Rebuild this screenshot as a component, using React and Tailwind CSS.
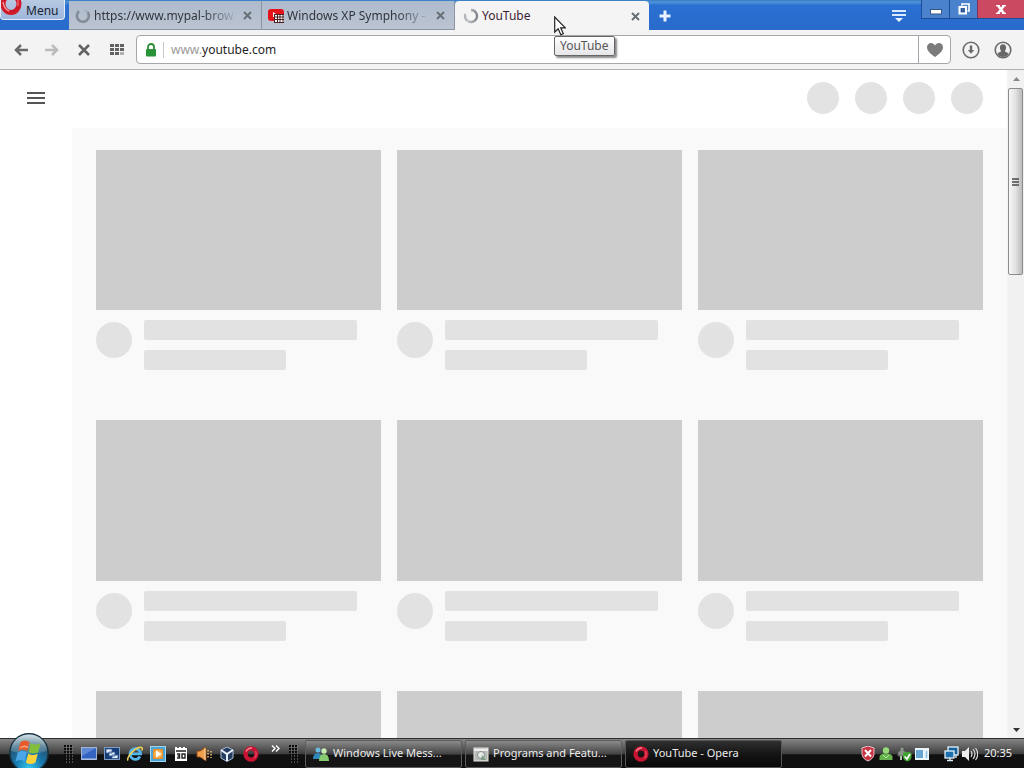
import React from "react";

const videos = ["a", "b", "c", "d", "e", "f", "g", "h", "i"];

function Spinner({ id }) {
  return (
    <svg className="size-4 shrink-0" viewBox="0 0 16 16" fill="none" aria-hidden="true">
      <defs>
        <linearGradient id={id} x1="0" y1="0" x2="1" y2="0">
          <stop offset="0" stopColor="#c9ccd1" />
          <stop offset="1" stopColor="#7f858d" />
        </linearGradient>
      </defs>
      <path d="M8 2a6 6 0 1 1-6 6" stroke="#e0e2e6" strokeWidth="2.4" />
      <path d="M2.400 6a6 6 0 0 0 1.600 6.500" stroke="#b4b8be" strokeWidth="2.4" />
      <path d="M8 2a6 6 0 1 1-4 10.500" stroke={`url(#${id})`} strokeWidth="2.4" />
    </svg>
  );
}

function DarkSpinner() {
  return (
    <svg className="size-4 shrink-0" viewBox="0 0 16 16" fill="none" aria-hidden="true">
      <path d="M4 3.2a6 6 0 1 0 8.6.9" stroke="#848b96" strokeWidth="2.6" />
      <path d="M12.6 4.1a6 6 0 0 0-3-2" stroke="#a5aebb" strokeWidth="2" />
    </svg>
  );
}

function VideoFavicon() {
  return (
    <svg className="size-4 shrink-0" viewBox="0 0 16 16" aria-hidden="true">
      <rect x="0" y="1" width="16" height="12" rx="3" fill="#e3131a" />
      <path d="M5 4l3 2v3H5z" fill="#fff" />
      <rect x="6" y="6" width="10" height="9" fill="#fff" />
      <path d="M6 6.500h10M6 9h10M6 11.500h10M6 14.500h10M6.500 6v9M9.500 6v9M12 6v9M15 6v9" stroke="#4b2024" strokeWidth="1" />
    </svg>
  );
}

function TabClose({ label }) {
  return (
    <button aria-label={label} className="flex size-4 shrink-0 items-center justify-center">
      <svg className="size-[9px]" viewBox="0 0 9 9" aria-hidden="true">
        <path d="M1 1l7 7M8 1L1 8" stroke="#6a6f77" strokeWidth="2" />
      </svg>
    </button>
  );
}

function Tab({ icon, title, active }) {
  return (
    <div
      className={
        active
          ? "flex w-[194px] items-center rounded-t-sm bg-[#f4f4f4] pt-px pr-1.5 pl-2"
          : "flex w-[193px] items-center border-r border-b border-[#8b94a3] bg-linear-to-b from-[#aebbcd] to-[#bbc3d0] pt-px pr-1.5 pl-1.5"
      }
    >
      {icon}
      <button
        className={
          "ml-[3px] min-w-0 flex-1 text-left text-xs whitespace-nowrap " +
          (active ? "text-[#3c1c34]" : "mask-r-from-75% text-[#30353e]")
        }
      >
        {title}
      </button>
      <TabClose label={`Close ${title}`} />
    </div>
  );
}

function OperaO({ className }) {
  return (
    <svg className={className} viewBox="0 0 16 16" aria-hidden="true">
      <ellipse cx="8" cy="8" rx="5.400" ry="5.600" fill="none" stroke="#c81432" strokeWidth="4.400" />
      <path d="M3 5.500Q5 1.800 9 2" fill="none" stroke="#f08492" strokeWidth="1.400" />
      <path d="M12.500 5q1.800 4-1 7" fill="none" stroke="#e34a60" strokeWidth="1.200" />
    </svg>
  );
}

function TopBar() {
  return (
    <header className="flex h-[30px] items-start border-t border-[#3d82c6] bg-linear-to-b from-[#4a8fd6] from-5% via-[#2a6fd2] via-15% to-[#296bcb]">
      <button className="-mt-px flex h-5 w-[65px] items-center overflow-hidden rounded-b-sm border border-t-0 border-[#e2ebf6] bg-linear-to-b from-[#b8cae2] to-[#9db6dc] text-xs text-[#20242e]">
        <svg className="h-5 w-6 shrink-0" viewBox="0 0 24 20" aria-hidden="true">
          <ellipse cx="10" cy="4" rx="8" ry="8.500" fill="none" stroke="#cf1929" strokeWidth="5" />
          <path d="M2 2q1 7 6 9" fill="none" stroke="#f59a9d" strokeWidth="1.500" />
          <path d="M17 0v6" stroke="#ed5d65" strokeWidth="1.500" />
        </svg>
        <span className="pt-0.5 pl-px">Menu</span>
      </button>
      <nav aria-label="Tabs" className="ml-1 flex h-[29px] min-w-0 items-stretch">
        <Tab icon={<DarkSpinner />} title="https://www.mypal-brow" />
        <Tab icon={<VideoFavicon />} title="Windows XP Symphony -" />
        <Tab icon={<Spinner id="activeSpin" />} title="YouTube" active />
      </nav>
      <button aria-label="New tab" className="flex h-[29px] w-8 items-center justify-center">
        <svg className="size-3" viewBox="0 0 12 12" aria-hidden="true">
          <path d="M6 .5v11M.5 6h11" stroke="#e9f2ff" strokeWidth="3" />
        </svg>
      </button>
      <div className="flex-1" />
      <button aria-label="Tab list" className="mr-3 flex h-[29px] w-5 items-center justify-center">
        <svg className="h-3 w-[14px]" viewBox="0 0 14 12" aria-hidden="true">
          <path d="M0 1h14M0 5h14" stroke="#dceaff" strokeWidth="2" />
          <path d="M3 8h8l-4 4z" fill="#eef5ff" />
        </svg>
      </button>
      <div className="-mt-px flex h-[19px] border-b border-l border-[#1e4d95]">
        <button aria-label="Minimize" className="flex w-7 items-center justify-center border-r border-[#1e4d95] bg-[#4a82cd]">
          <svg className="h-3 w-3" viewBox="0 0 12 12" aria-hidden="true">
            <rect x=".5" y="6.500" width="11" height="4.500" fill="#fff" stroke="#355681" />
          </svg>
        </button>
        <button aria-label="Restore" className="flex w-7 items-center justify-center border-r border-[#7a3360] bg-[#4a82cd]">
          <svg className="size-3" viewBox="0 0 12 12" fill="none" aria-hidden="true">
            <path d="M4 2.500V1h7v7H9.500" stroke="#fff" strokeWidth="1.600" />
            <rect x="1.500" y="4" width="6.500" height="6.500" stroke="#fff" strokeWidth="2" />
            <rect x="3.500" y="6" width="2.500" height="2.500" stroke="#26477c" strokeWidth="1" />
          </svg>
        </button>
        <button aria-label="Close window" className="flex w-[46px] items-center justify-center bg-[#cb4a62]">
          <svg className="h-[9px] w-[10px]" viewBox="0 0 10 9" aria-hidden="true">
            <path d="M2 0.500l6 8M8 0.500l-6 8" stroke="#fff" strokeWidth="2.400" />
            <path d="M0 .7h4M6 .7h4M0 8.300h4M6 8.300h4" stroke="#fff" strokeWidth="1.300" />
          </svg>
        </button>
      </div>
    </header>
  );
}

function Arrow({ color, flip }) {
  return (
    <svg className={flip ? "h-3 w-[14px] rotate-180" : "h-3 w-[14px]"} viewBox="0 0 14 12" fill="none" aria-hidden="true">
      <path d="M14 6H2.500M7 1L2 6l5 5" stroke={color} strokeWidth="2.500" />
    </svg>
  );
}

function Toolbar() {
  return (
    <div className="flex h-10 items-center border-b border-[#aeb1b5] bg-[#f3f3f3] pr-[5px]">
      <div className="flex pl-1.5">
        <button aria-label="Back" className="flex h-7 w-[30px] items-center justify-center"><Arrow color="#6a6a6a" /></button>
        <button aria-label="Forward" className="flex h-7 w-8 items-center justify-center"><Arrow color="#bbb" flip /></button>
        <button aria-label="Stop" className="flex h-7 w-8 items-center justify-center">
          <svg className="size-3" viewBox="0 0 12 12" aria-hidden="true">
            <path d="M1 1l10 10M11 1L1 11" stroke="#636363" strokeWidth="2.600" />
          </svg>
        </button>
        <button aria-label="Speed dial" className="flex h-7 w-[34px] items-center justify-center">
          <svg className="h-[11px] w-[14px]" viewBox="0 0 14 11" fill="#626262" aria-hidden="true">
            <path d="M0 0h4v3H0zM5 0h4v3H5zM10 0h4v3h-4zM0 4h4v3H0zM5 4h4v3H5zM10 4h4v3h-4zM0 8h4v3H0zM5 8h4v3H5z" />
            <path d="M10 8h4v3h-4z" opacity=".45" />
          </svg>
        </button>
      </div>
      <div className="ml-0.5 flex h-[29px] flex-1 items-center rounded-sm border border-[#a4a7ab] bg-white">
        <svg className="ml-2 h-[14px] w-3 shrink-0" viewBox="0 0 12 14" aria-hidden="true">
          <path d="M3 7V4a3 3 0 0 1 6 0v3" fill="none" stroke="#2c8d35" strokeWidth="1.800" />
          <rect x="1" y="6" width="10" height="7.500" rx="1" fill="#279336" />
        </svg>
        <div className="ml-1.5 h-4 border-l border-[#c8c8c8]" />
        <div className="relative ml-[7px] flex-1">
          <input
            aria-label="Address"
            defaultValue="www.youtube.com"
            className="block w-full bg-transparent text-xs leading-5 text-transparent caret-black outline-none"
          />
          <span aria-hidden="true" className="pointer-events-none absolute inset-0 text-xs leading-5 text-[#1e1e1e]">
            <span className="text-[#999]">www.</span>youtube.com
          </span>
        </div>
        <button aria-label="Add bookmark" className="flex h-full w-8 items-center justify-center border-l border-[#a4a7ab]">
          <svg className="h-[14px] w-4" viewBox="0 0 16 14" fill="#7b7b7b" aria-hidden="true">
            <path d="M8 14C4 11 0 8 0 4.200 0 1.700 1.900 0 4 0c1.700 0 3.200.9 4 2.400C8.800.9 10.300 0 12 0c2.100 0 4 1.700 4 4.200C16 8 12 11 8 14z" />
          </svg>
        </button>
      </div>
      <button aria-label="Downloads" className="ml-1 flex size-8 items-center justify-center">
        <svg className="size-[18px]" viewBox="0 0 18 18" aria-hidden="true">
          <circle cx="9" cy="9" r="7.800" fill="none" stroke="#6c6c6c" strokeWidth="1.600" />
          <path d="M7.800 4.500h2.400v4.500h2L9 12.800 5.800 9h2z" fill="#6a6a6a" />
        </svg>
      </button>
      <button aria-label="Profile" className="flex size-8 items-center justify-center">
        <svg className="size-[18px]" viewBox="0 0 18 18" aria-hidden="true">
          <circle cx="9" cy="9" r="7.800" fill="none" stroke="#6c6c6c" strokeWidth="1.600" />
          <path d="M9 3.300c2 0 3.100 1.400 3.100 3.200 0 1.500-.6 2.700-1.300 3.400.2 1 3.200 1.300 4 2.900-1.300 2-3.300 3.300-5.800 3.300s-4.500-1.300-5.800-3.300c.8-1.600 3.800-1.900 4-2.900-.7-.7-1.300-1.900-1.300-3.400C5.900 4.700 7 3.300 9 3.300z" fill="#686868" />
        </svg>
      </button>
    </div>
  );
}

function VideoCard() {
  return (
    <article>
      <div className="aspect-video bg-[#cdcdcd]" />
      <div className="mt-2.5 flex gap-3">
        <div className="mt-0.5 size-9 shrink-0 rounded-full bg-[#e2e2e2]" />
        <div className="flex flex-1 flex-col gap-2.5">
          <div className="h-5 w-9/10 rounded-xs bg-[#e2e2e2]" />
          <div className="h-5 w-3/5 rounded-xs bg-[#e2e2e2]" />
        </div>
      </div>
    </article>
  );
}

function Scrollbar() {
  return (
    <div className="flex w-[17px] shrink-0 flex-col items-stretch border-l border-[#f4f4f4] bg-[#f1f1f1]">
      <button aria-label="Scroll up" className="flex h-[18px] items-center justify-center">
        <svg className="h-1 w-[7px]" viewBox="0 0 7 4" aria-hidden="true"><path d="M0 4l3.500-4L7 4z" fill="#888" /></svg>
      </button>
      <div className="mr-px flex h-[187px] items-center justify-center rounded-xs border border-[#8c8c8c] bg-linear-to-r from-[#f7f7f7] via-[#e2e2e2] to-[#bcbcbc]">
        <svg className="h-2 w-[7px]" viewBox="0 0 7 8" aria-hidden="true"><path d="M0 1h7M0 4h7M0 7h7" stroke="#4a4a4a" strokeWidth="1.600" /></svg>
      </div>
      <div className="flex-1" />
      <button aria-label="Scroll down" className="flex h-[17px] items-center justify-center">
        <svg className="h-1 w-[7px]" viewBox="0 0 7 4" aria-hidden="true"><path d="M0 0l3.500 4L7 0z" fill="#333" /></svg>
      </button>
    </div>
  );
}

function PageArea() {
  return (
    <div className="flex min-h-0 flex-1 bg-white">
      <main className="flex min-w-0 flex-1 flex-col overflow-hidden">
        <div className="flex h-[58px] shrink-0 items-center justify-between px-6 pb-0.5">
          <button aria-label="Guide" className="flex size-6 items-center justify-center">
            <svg className="h-3 w-[18px]" viewBox="0 0 18 12" aria-hidden="true">
              <path d="M0 1h18M0 6h18M0 11h18" stroke="#555" strokeWidth="2" />
            </svg>
          </button>
          <div className="flex gap-4">
            <div className="size-8 rounded-full bg-[#e3e3e3]" />
            <div className="size-8 rounded-full bg-[#e3e3e3]" />
            <div className="size-8 rounded-full bg-[#e3e3e3]" />
            <div className="size-8 rounded-full bg-[#e3e3e3]" />
          </div>
        </div>
        <div className="ml-[72px] min-h-0 flex-1 overflow-hidden bg-[#f9f9f9] px-6 pt-[22px]">
          <div className="grid grid-cols-3 gap-x-4 gap-y-[50px]">
            {videos.map((v) => <VideoCard key={v} />)}
          </div>
        </div>
      </main>
      <Scrollbar />
    </div>
  );
}

function Grip() {
  return (
    <svg className="h-[18px] w-[9px] shrink-0" viewBox="0 0 9 18" aria-hidden="true">
      <path d="M1 0v18M4 0v18M7 0v18" stroke="#0c0c0c" strokeWidth="2" strokeDasharray="2 1" />
      <path d="M2.500 1.500v16M5.500 1.500v16M8.500 1.500v16" stroke="#8a8a8a" strokeWidth="1" strokeDasharray="1 2" />
    </svg>
  );
}

function StartOrb() {
  return (
    <svg className="size-[42px] shrink-0" viewBox="0 0 42 42" aria-hidden="true">
      <defs>
        <radialGradient id="orb" cx=".5" cy=".9" r=".9">
          <stop offset="0" stopColor="#36c8ef" />
          <stop offset=".4" stopColor="#1878ae" />
          <stop offset=".75" stopColor="#25536f" />
          <stop offset="1" stopColor="#8aa5b4" />
        </radialGradient>
        <linearGradient id="gloss" x1="0" y1="0" x2="0" y2="1">
          <stop offset="0" stopColor="#d9e4e8" stopOpacity=".9" />
          <stop offset="1" stopColor="#8fb0bf" stopOpacity=".25" />
        </linearGradient>
      </defs>
      <circle cx="21" cy="20" r="19.200" fill="url(#orb)" stroke="#16303f" strokeWidth="1.500" />
      <path d="M3 18a18 16.500 0 0 1 36 0q-18 6-36 0z" fill="url(#gloss)" />
      <path d="M12.500 9q4.500-3 9 0l-2.200 9q-4.500-3-9.300 0z" fill="#e85a2c" />
      <path d="M22.800 10q4.500 3 9.700 0l-2.300 9q-5 3-9.600 0z" fill="#84bf3c" />
      <path d="M9.700 19.500q4.500-3 9.200 0l-2.300 9q-4.500-3-9.100 0z" fill="#4ba7e8" />
      <path d="M20.200 20.400q4.500 3 9.600 0l-2.300 9q-5 3-9.600 0z" fill="#ffd23c" />
      <path d="M12 15q4-3 8-.5" fill="none" stroke="#ffb98c" strokeWidth="1.500" opacity=".7" />
    </svg>
  );
}

function QuickIcon({ label, children }) {
  return (
    <button aria-label={label} className="flex w-[23px] items-center justify-center">
      <svg className="size-4" viewBox="0 0 16 16" aria-hidden="true">{children}</svg>
    </button>
  );
}

function QuickLaunch() {
  return (
    <div className="flex items-center pl-1">
      <QuickIcon label="Show desktop">
        <rect x=".5" y="1.500" width="15" height="12" fill="#3464c2" stroke="#9fb4d8" />
        <path d="M1 2h14L1 10z" fill="#5f88d4" />
        <path d="M1 13h14" stroke="#b6cbe9" />
      </QuickIcon>
      <QuickIcon label="Switch windows">
        <rect x=".5" y="1.500" width="15" height="12" fill="#173d77" stroke="#7f9dc4" />
        <path d="M2 3h6v4H2zM5 6h6v4H5zM8 9h6v3.500H8z" fill="#e2eefc" stroke="#31588f" strokeWidth=".8" />
      </QuickIcon>
      <QuickIcon label="Internet Explorer">
        <path d="M13 10.500a5.300 5.300 0 1 1 .6-2.700H4" fill="none" stroke="#53b6ea" strokeWidth="2.800" />
        <path d="M1 14.500C-1 11 9 .5 14.500 1.500q1.500.5.3 3" fill="none" stroke="#efd054" strokeWidth="1.600" />
      </QuickIcon>
      <QuickIcon label="Media Player">
        <rect x=".5" y=".5" width="15" height="15" fill="#4ba4d4" stroke="#9dd6ee" />
        <rect x="3" y="3" width="10" height="10" rx="1" fill="#ee9129" />
        <circle cx="8" cy="8" r="4" fill="#f6b45a" />
        <path d="M6 4.500l5.500 3.500L6 11.500z" fill="#fff" />
      </QuickIcon>
      <QuickIcon label="Calendar">
        <path d="M2 1h2v1h2V1h2v1h2V1h2v1h2v13H2z" fill="#fff" />
        <path d="M3 5h10" stroke="#1c1c1c" strokeWidth="1.500" />
        <path d="M4 8h2.500v4H4M4.500 10h2M9 8h3v4H9z" fill="none" stroke="#222" strokeWidth="1.400" />
      </QuickIcon>
      <QuickIcon label="Volume">
        <path d="M1 5h3l6-4v14l-6-4H1z" fill="#f0a04c" stroke="#8c471c" />
        <path d="M9 2v12" stroke="#ffdba3" />
        <path d="M12 4v9M15 5v7" stroke="#f6bd67" strokeDasharray="1.500 1.500" strokeWidth="1.500" />
      </QuickIcon>
      <QuickIcon label="VirtualBox">
        <path d="M8 1l6 3v8l-6 3.500L2 12V4z" fill="#263c5e" stroke="#a9bfd7" />
        <path d="M2 4l6 4 6-4M8 8v7" fill="none" stroke="#e7f1fb" strokeWidth="2" />
      </QuickIcon>
      <button aria-label="Opera" className="flex w-[25px] items-center justify-center"><OperaO className="size-4" /></button>
      <button aria-label="More shortcuts" className="mb-2.5 ml-1 flex w-4 justify-center">
        <svg className="h-[7px] w-[9px]" viewBox="0 0 9 7" fill="none" aria-hidden="true">
          <path d="M1 .5l3 3-3 3M5 .5l3 3-3 3" stroke="#fff" strokeWidth="1.400" />
        </svg>
      </button>
    </div>
  );
}

function TaskButton({ icon, title, active }) {
  return (
    <button
      className={
        "flex h-7 w-[157px] items-center gap-1 rounded-xs border px-[7px] text-[11px] whitespace-nowrap text-[#ececec] " +
        (active
          ? "border-[#565656] bg-linear-to-b from-[#303030] via-[#151515] via-50% to-[#080808]"
          : "border-[#5d5d5d] bg-linear-to-b from-[#8b8b8b] via-[#444] via-50% to-[#151515] to-55%")
      }
    >
      {icon}
      <span>{title}</span>
    </button>
  );
}

function TrayIcon({ children }) {
  return (
    <svg className="size-4" viewBox="0 0 16 16" aria-hidden="true">{children}</svg>
  );
}

function Taskbar() {
  return (
    <footer className="z-10 flex h-[30px] shrink-0 items-center border-t border-[#2d2d2d] bg-linear-to-b from-[#858585] via-[#404040] via-50% to-[#101010] to-55%">
      <button aria-label="Start" className="ml-2 shrink-0"><StartOrb /></button>
      <div className="ml-3.5 flex items-center">
        <Grip />
        <QuickLaunch />
        <div className="ml-1.5"><Grip /></div>
      </div>
      <div className="ml-[7px] flex gap-[3px]">
        <TaskButton
          title="Windows Live Mess..."
          icon={
            <svg className="size-4 shrink-0" viewBox="0 0 16 16" aria-hidden="true">
              <circle cx="5" cy="4" r="2.500" fill="#6abbe0" />
              <path d="M0 13q0-6 5-6 4 0 4 6z" fill="#2f89b8" />
              <circle cx="11" cy="5" r="2.700" fill="#c3ecb2" />
              <path d="M6 15q0-7 5-7t5 7z" fill="#86cb70" />
            </svg>
          }
        />
        <TaskButton
          title="Programs and Featu..."
          icon={
            <svg className="size-4 shrink-0" viewBox="0 0 16 16" aria-hidden="true">
              <rect x="1" y="2" width="14" height="13" fill="#b8bbb5" stroke="#e6e6e1" />
              <path d="M1 4h14" stroke="#eee" strokeWidth="2" />
              <circle cx="8" cy="9" r="3.500" fill="#e8ece9" stroke="#81908c" />
              <path d="M9 9l4 5H8z" fill="#7e9e84" />
            </svg>
          }
        />
        <TaskButton active title="YouTube - Opera" icon={<OperaO className="size-4 shrink-0" />} />
      </div>
      <div className="flex-1" />
      <div className="flex items-center gap-0.5 pr-3">
        <TrayIcon>
          <path d="M8 0l6 2v5.500q0 5-6 7.500-6-2.500-6-7.500V2z" fill="#c93341" stroke="#ebc4c7" />
          <path d="M5 4l6 6.500M11 4l-6 6.500" stroke="#fff" strokeWidth="2" />
        </TrayIcon>
        <TrayIcon>
          <circle cx="8" cy="4.500" r="3.200" fill="#97d878" />
          <path d="M1.500 14V11q0-3.500 6.500-3.500t6.500 3.500v3z" fill="#65b14e" />
          <path d="M5 9l3 3 3-3" fill="none" stroke="#b6ec9a" />
        </TrayIcon>
        <TrayIcon>
          <path d="M4 1h4v4h2v5H2V5h2z" fill="#8c9289" stroke="#4c544a" />
          <path d="M5 10v4" stroke="#b5c4b0" strokeWidth="2" />
          <path d="M7 7q4.500-2 8.500 0v4q0 3-4.200 4.500Q7 14 7 11z" fill="#40a530" />
          <path d="M8.500 10.500l2.500 2.500 3-5" fill="none" stroke="#fff" strokeWidth="1.700" />
        </TrayIcon>
        <TrayIcon>
          <rect x="1" y="2" width="14" height="12" fill="#e9f4fb" />
          <rect x="2" y="4" width="7" height="8" fill="#69a5d3" />
          <path d="M12.500 5v7" stroke="#8dbbe0" strokeWidth="1.500" />
        </TrayIcon>
        <div className="ml-3 flex gap-0.5">
          <TrayIcon>
            <rect x="4" y="1" width="10" height="8" fill="#14619a" stroke="#e5f3fb" strokeWidth="1.300" />
            <rect x="1" y="5" width="9" height="7" fill="#1b70ad" stroke="#e5f3fb" strokeWidth="1.300" />
            <path d="M6 12v2M3 14.500h6M12 9v3" stroke="#d9ebf5" strokeWidth="1.400" />
          </TrayIcon>
          <TrayIcon>
            <path d="M0 5h3l4-4v14l-4-4H0z" fill="#eee" />
            <path d="M9 5q2 3 0 6M11 3q4 5 0 10M13.500 2q4.500 6 0 12" fill="none" stroke="#ddd" strokeWidth="1.200" />
          </TrayIcon>
        </div>
        <time className="ml-1 text-[11px] text-[#f2f2f2]">20:35</time>
      </div>
    </footer>
  );
}

export default function App() {
  return (
    <div className="relative flex h-screen flex-col overflow-hidden bg-white font-['Noto_Sans','Open_Sans',sans-serif]">
      <TopBar />
      <Toolbar />
      <PageArea />
      <Taskbar />
      <div role="tooltip" className="absolute top-9 left-[554px] rounded-xs border border-[#666] bg-linear-to-b from-white to-[#e6e6e9] px-[5px] text-xs leading-[18px] text-[#555] shadow-[2px_2px_2px_#0007]">
        YouTube
      </div>
      <svg className="pointer-events-none absolute top-4 left-[554px] h-5 w-3" viewBox="0 0 12 20" aria-hidden="true">
        <path d="M.7 1v15l3.500-3.300 2.600 6 2.500-1.100-2.600-5.800h4.600z" fill="#fff" stroke="#222" strokeWidth="1.200" />
      </svg>
    </div>
  );
}
